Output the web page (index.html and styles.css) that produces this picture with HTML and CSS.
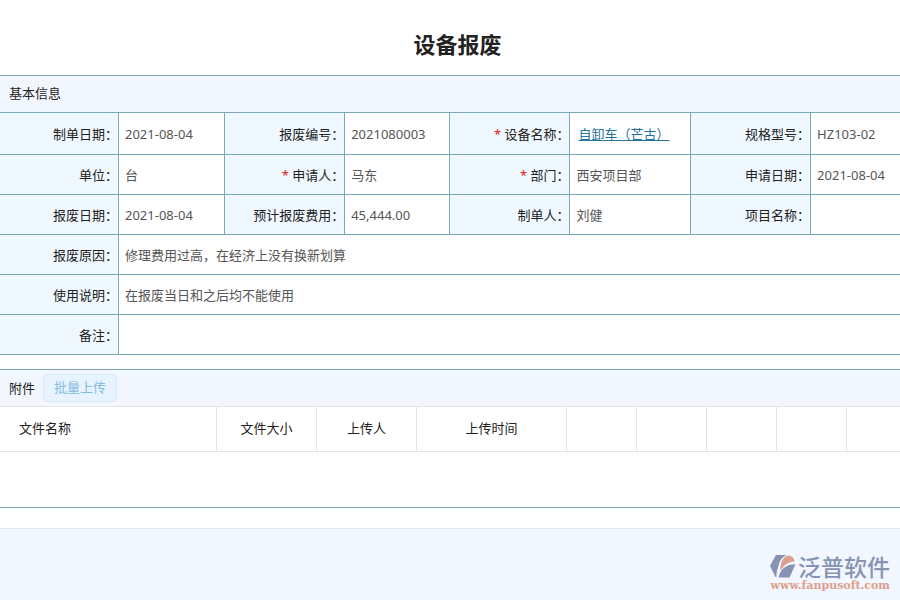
FILE: index.html
```
<!DOCTYPE html>
<html lang="zh-Hans">
<head>
  <meta charset="UTF-8">
  <title>设备报废</title>
  <meta name="viewport" content="width=device-width, initial-scale=1.0">
  <link rel="stylesheet" href="styles.css">
</head>
<body>

  <h1>设备报废</h1>

  <section class="panel">
    <h2 class="panel-title">基本信息</h2>
    <table class="info">
      <colgroup>
        <col class="col-first">
        <col class="col-date">
        <col class="col-label">
        <col class="col-code">
        <col class="col-label">
        <col class="col-wide">
        <col class="col-label">
        <col>
      </colgroup>
      <tr class="row-top">
        <th scope="row">制单日期：</th>
        <td>2021-08-04</td>
        <th scope="row">报废编号：</th>
        <td>2021080003</td>
        <th scope="row"><span class="required">*</span> 设备名称：</th>
        <td><a class="link" href="#">自卸车（芒古）</a></td>
        <th scope="row">规格型号：</th>
        <td>HZ103-02</td>
      </tr>
      <tr>
        <th scope="row">单位：</th>
        <td>台</td>
        <th scope="row"><span class="required">*</span> 申请人：</th>
        <td>马东</td>
        <th scope="row"><span class="required">*</span> 部门：</th>
        <td>西安项目部</td>
        <th scope="row">申请日期：</th>
        <td>2021-08-04</td>
      </tr>
      <tr>
        <th scope="row">报废日期：</th>
        <td>2021-08-04</td>
        <th scope="row">预计报废费用：</th>
        <td>45,444.00</td>
        <th scope="row">制单人：</th>
        <td>刘健</td>
        <th scope="row">项目名称：</th>
        <td></td>
      </tr>
      <tr>
        <th scope="row">报废原因：</th>
        <td colspan="7">修理费用过高，在经济上没有换新划算</td>
      </tr>
      <tr>
        <th scope="row">使用说明：</th>
        <td colspan="7">在报废当日和之后均不能使用</td>
      </tr>
      <tr>
        <th scope="row">备注：</th>
        <td colspan="7"></td>
      </tr>
    </table>
  </section>

  <section class="panel attachments">
    <div class="panel-title">
      <h2>附件</h2>
      <button type="button" class="upload" disabled>批量上传</button>
    </div>
    <table class="files">
      <colgroup>
        <col class="col-name">
        <col class="col-size">
        <col class="col-size">
        <col class="col-time">
        <col class="col-action">
        <col class="col-action">
        <col class="col-action">
        <col class="col-action">
        <col>
      </colgroup>
      <thead>
        <tr>
          <th>文件名称</th>
          <th>文件大小</th>
          <th>上传人</th>
          <th>上传时间</th>
          <th></th>
          <th></th>
          <th></th>
          <th></th>
          <th></th>
        </tr>
      </thead>
    </table>
  </section>

  <footer class="footer">
    <div class="brand">
      <div class="brand-name">
        <svg width="26" height="26" viewBox="0 0 26 26" aria-hidden="true">
          <path fill="#8793b3" d="M0 13 6 2H16.500C12.500 4 9.800 7 9 11 8.300 14.500 6 19 6.500 24H5.500z"/>
          <path fill="#dda08c" d="M10.500 18C9.800 9.500 13 3.500 18.500 2.500c3.500.2 5.500 2.500 6 5.700C18.500 9.200 13.500 12 10.500 18z"/>
          <path fill="#8793b3" d="M8.500 24.500C10.500 16 16 11.300 25.500 11.300L19.500 24.500z"/>
        </svg>
        <span>泛普软件</span>
      </div>
      <div class="brand-url">www.fanpusoft.com</div>
    </div>
  </footer>

</body>
</html>
```
FILE: styles.css
```
body {
  display: flex;
  flex-direction: column;
  min-height: 100vh;
  margin: 0;
  background-color: #fff;
  color: #222;
  font-family: "Noto Sans", "Noto Sans CJK SC", sans-serif;
  font-size: 13px;
  line-height: 20px;
}

h1 {
  margin: 28px 0 15px;
  padding-left: 15px;
  text-align: center;
  font-size: 22px;
  line-height: 32px;
}

h2 {
  margin: 0;
  font-size: 13px;
  font-weight: normal;
}

.panel {
  border-top: 1px solid #7aa7b9;
}

.panel-title {
  display: flex;
  align-items: center;
  gap: 8px;
  box-sizing: border-box;
  height: 37px;
  padding: 0 9px 2px;
  border-bottom: 1px solid #7aa7b9;
  background-color: #f1f6ff;
}

table {
  width: 100%;
  table-layout: fixed;
  border-spacing: 0;
}

th {
  font-weight: normal;
}

/* 基本信息 */
.info th,
.info td {
  box-sizing: border-box;
  height: 40px;
  padding: 0 0 0 6px;
  border-right: 1px solid #7aa7b9;
  border-bottom: 1px solid #7aa7b9;
}

.info .row-top th,
.info .row-top td {
  height: 42px;
}

.info th {
  padding: 0;
  background-color: #f0f8ff;
  text-align: right;
}

.info td {
  color: #555;
}

.info td:last-child {
  border-right: none;
}

.col-first {
  width: 119px;
}

.col-label {
  width: 120px;
}

.col-date {
  width: 11.8%;
}

.col-code {
  width: 11.7%;
}

.col-wide {
  width: 13.4%;
}

.required {
  color: #e02020;
}

.link {
  padding: 0 2px;
  color: #23719c;
}

/* 附件 */
.attachments {
  min-height: 137px;
  margin-top: 14px;
  border-bottom: 1px solid #7aa7b9;
}

.attachments .panel-title {
  padding-bottom: 0;
  border-bottom-color: #e2e5e8;
}

.upload {
  height: 28px;
  padding: 0 10px 2px;
  border: 1px solid #d8e8f5;
  border-radius: 4px;
  background-color: #e7f3fe;
  color: #83bde0;
  font: inherit;
}

.files th {
  box-sizing: border-box;
  height: 45px;
  padding: 0 0 2px;
  border-right: 1px solid #e2e5e8;
  border-bottom: 1px solid #e2e5e8;
}

.files th:first-child {
  padding-left: 19px;
  text-align: left;
}

.files th:last-child {
  border-right: none;
}

.col-name {
  width: 217px;
}

.col-size {
  width: 100px;
}

.col-time {
  width: 150px;
}

.col-action {
  width: 70px;
}

.footer {
  display: flex;
  flex: 1;
  justify-content: flex-end;
  align-items: flex-end;
  margin-top: 20px;
  padding: 0 10px 8px;
  border-top: 1px solid #e2e8f0;
  background-color: #f1f6ff;
}

.brand-name {
  display: flex;
  align-items: center;
  justify-content: flex-end;
  gap: 2px;
  color: #8793b3;
  font-family: "Noto Sans CJK SC", sans-serif;
  font-size: 23px;
  font-weight: 500;
  line-height: 28px;
}

.brand-url {
  color: #dda08c;
  font-family: "DejaVu Serif", serif;
  font-size: 11px;
  font-weight: bold;
  line-height: 12px;
  text-align: right;
}
```
